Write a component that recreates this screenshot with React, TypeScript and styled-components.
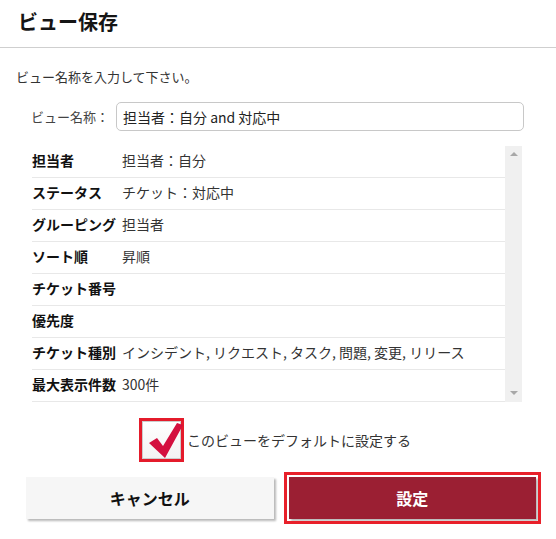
import React from "react";
import styled, { createGlobalStyle } from "styled-components";

const GlobalStyle = createGlobalStyle`
  html, body { margin: 0; padding: 0; background: #fff; }
  body {
    font-family: "Noto Sans CJK JP", "Noto Sans", "Liberation Sans", sans-serif;
    color: #333;
  }
  * { box-sizing: border-box; }
`;

const Dialog = styled.div`
  width: 556px;
  height: 539px;
  background: #fff;
  display: flex;
  flex-direction: column;
`;

const Header = styled.div`
  height: 48px;
  padding: 0 18px 3px;
  display: flex;
  align-items: center;
  border-bottom: 1px solid #cfcfcf;
`;

const Title = styled.h1`
  margin: 0;
  font-size: 20px;
  line-height: 26px;
  font-weight: 700;
  color: #151515;
`;

const Instruction = styled.p`
  margin: 19px 0 0;
  padding: 0 16px;
  font-size: 13px;
  line-height: 20px;
  color: #333;
`;

const NameRow = styled.div`
  margin-top: 15px;
  display: flex;
  align-items: center;
  padding: 0 32px 0 31px;
`;

const NameLabel = styled.label`
  width: 85px;
  flex: none;
  font-size: 13px;
  color: #444;
  white-space: nowrap;
`;

const NameInput = styled.input`
  flex: 1;
  height: 29px;
  border: 1px solid #c8c8c8;
  border-radius: 5px;
  padding: 0 6px;
  font-family: inherit;
  font-size: 14px;
  color: #222;
  outline: none;
`;

const TableWrap = styled.div`
  margin: 15px 34px 0 32px;
  height: 256px;
  display: flex;
`;

const Rows = styled.div`
  flex: 1;
  display: flex;
  flex-direction: column;
`;

const Row = styled.div`
  height: 32px;
  padding-bottom: 3px;
  display: flex;
  align-items: center;
  border-bottom: 1px solid #e8e8e8;
  font-size: 14px;
  line-height: 20px;
  white-space: nowrap;
`;

const Label = styled.span`
  width: 90px;
  flex: none;
  font-weight: 700;
  color: #111;
`;

const Value = styled.span`
  color: #333;
`;

const ScrollTrack = styled.div`
  width: 17px;
  flex: none;
  background: #f0f0f0;
  display: flex;
  flex-direction: column;
  justify-content: space-between;
  align-items: center;
  padding: 6px 0 7px;
`;

const Arrow = styled.span<{ $down?: boolean }>`
  width: 0;
  height: 0;
  border-left: 4px solid transparent;
  border-right: 4px solid transparent;
  ${(p) =>
    p.$down
      ? "border-top: 4px solid #a8a8a8;"
      : "border-bottom: 4px solid #a8a8a8;"}
`;

const CheckRow = styled.label`
  margin-top: 16px;
  display: flex;
  align-items: center;
  justify-content: center;
  gap: 3px;
  padding-right: 6px;
`;

const CheckFrame = styled.span`
  position: relative;
  width: 45px;
  height: 44px;
  border: 3px solid #e41b2b;
  display: block;
`;

const CheckInner = styled.span`
  display: block;
  width: 100%;
  height: 100%;
  border: 1px solid #cccccc;
  background: linear-gradient(#ffffff, #f3f3f3);
`;

const CheckMark = styled.svg`
  position: absolute;
  left: -3px;
  top: -3px;
  width: 45px;
  height: 44px;
`;

const CheckText = styled.span`
  font-size: 14px;
  line-height: 20px;
  color: #333;
`;

const Buttons = styled.div`
  margin-top: 15px;
  display: grid;
  grid-template-columns: 1fr 1fr;
  gap: 15px;
  padding: 0 20px 0 26px;
`;

const Button = styled.button<{ $primary?: boolean }>`
  height: 42px;
  border: none;
  font-family: inherit;
  font-size: 16px;
  font-weight: 700;
  cursor: pointer;
  background: ${(p) => (p.$primary ? "#9b1f33" : "#f6f6f6")};
  color: ${(p) => (p.$primary ? "#ffffff" : "#111")};
  box-shadow: 2px 2px 2px rgba(0, 0, 0, 0.28);
  ${(p) => (p.$primary ? "outline: 3px solid #e8202a; outline-offset: 2px;" : "")}
`;

const rows: [string, string][] = [
  ["担当者", "担当者：自分"],
  ["ステータス", "チケット：対応中"],
  ["グルーピング", "担当者"],
  ["ソート順", "昇順"],
  ["チケット番号", ""],
  ["優先度", ""],
  ["チケット種別", "インシデント, リクエスト, タスク, 問題, 変更, リリース"],
  ["最大表示件数", "300件"],
];

export default function App() {
  return (
    <>
      <GlobalStyle />
      <Dialog>
        <Header>
          <Title>ビュー保存</Title>
        </Header>
        <Instruction>ビュー名称を入力して下さい。</Instruction>
        <NameRow>
          <NameLabel>ビュー名称：</NameLabel>
          <NameInput defaultValue="担当者：自分 and 対応中" />
        </NameRow>
        <TableWrap>
          <Rows>
            {rows.map(([l, v]) => (
              <Row key={l}>
                <Label>{l}</Label>
                <Value>{v}</Value>
              </Row>
            ))}
          </Rows>
          <ScrollTrack>
            <Arrow />
            <Arrow $down />
          </ScrollTrack>
        </TableWrap>
        <CheckRow>
          <CheckFrame>
            <CheckInner />
            <CheckMark viewBox="0 0 45 44">
              <polygon
                points="10,25 18,20 24,28 38,5 44,7 26,40"
                fill="#d4103f"
              />
            </CheckMark>
          </CheckFrame>
          <CheckText>このビューをデフォルトに設定する</CheckText>
        </CheckRow>
        <Buttons>
          <Button>キャンセル</Button>
          <Button $primary>設定</Button>
        </Buttons>
      </Dialog>
    </>
  );
}
